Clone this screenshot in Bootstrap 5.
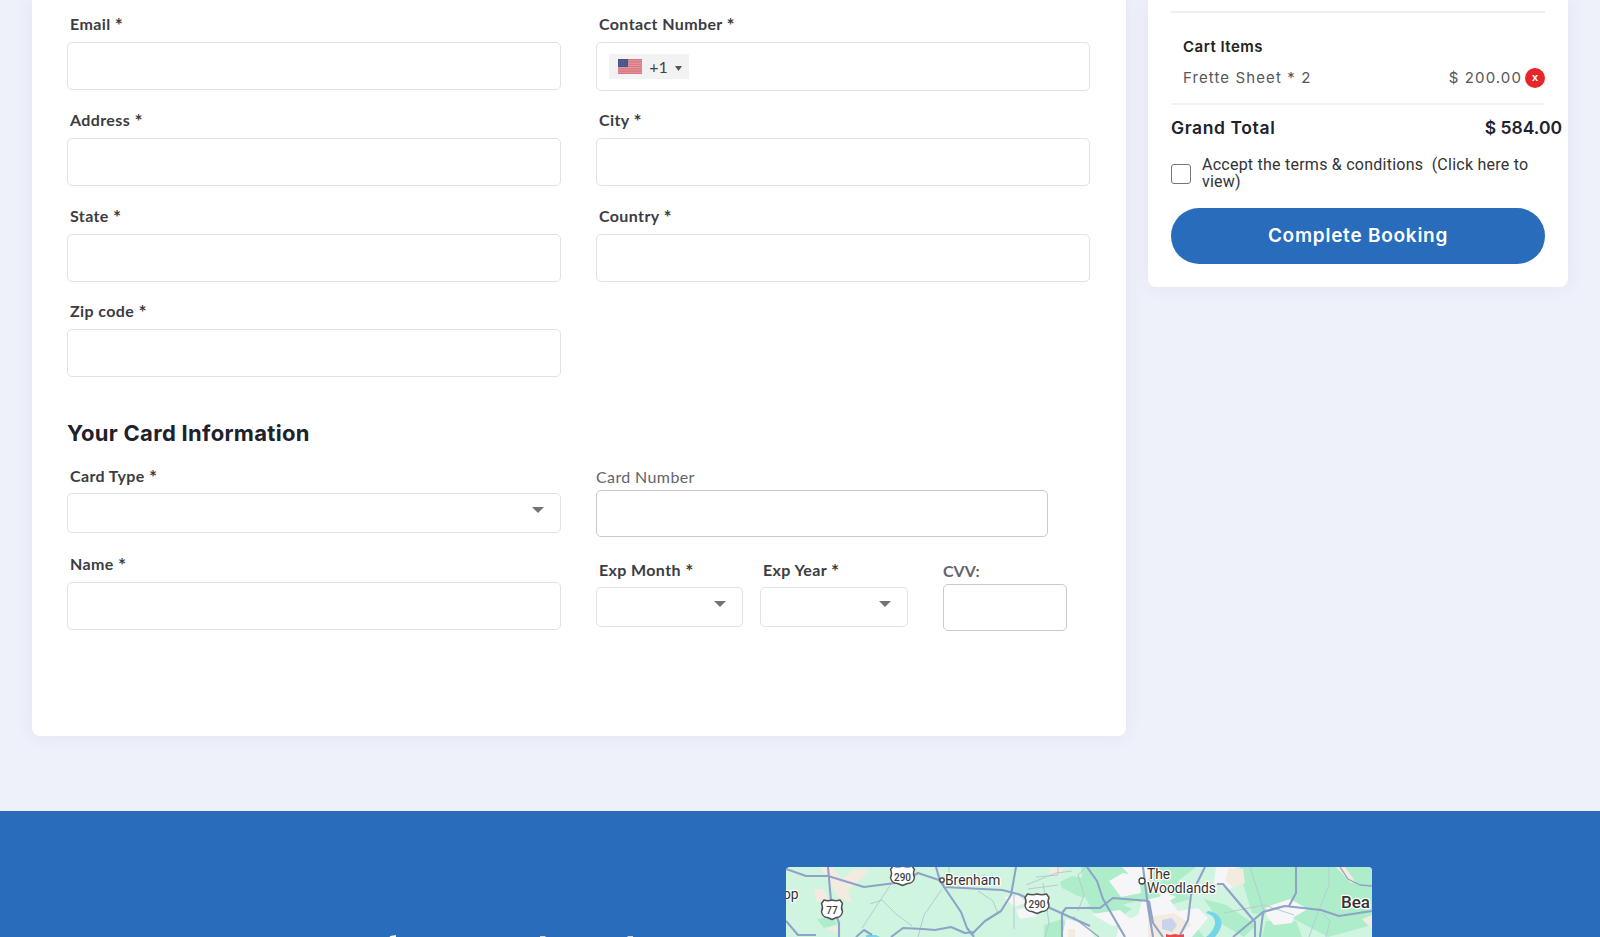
<!DOCTYPE html>
<html lang="en">
<head>
<meta charset="utf-8">
<meta name="viewport" content="width=device-width, initial-scale=1">
<title>Checkout</title>
<link href="https://cdn.jsdelivr.net/npm/bootstrap@5.3.0/dist/css/bootstrap.min.css" rel="stylesheet">
<style>
  body { background:#eef1fa; height:937px; font-family:Lato,"Open Sans",sans-serif; color:#2f3036; }
  .page-cards { height:811px; padding-left:32px; gap:22px; }
  .panel { background:#fff; border:0; border-radius:0 0 8px 8px; box-shadow:0 0 18px rgba(50,70,110,.07); }
  .form-panel { width:1094px; height:736px; padding:12px 36px 0 35px; flex:none; }
  .side-panel { width:420px; height:287px; padding:11px 23px 0; flex:none; }
  .fields { display:grid; grid-template-columns:494px 494px; column-gap:35px; }
  .cell { height:96px; }
  .cell-last { height:95px; }
  .lbl { display:block; font-size:16px; line-height:24px; height:24px; margin:0 0 6px 3px; font-weight:700; white-space:nowrap; color:#3b3c42; letter-spacing:.38px; }
  .lbl i { font-style:normal; font-size:19px; line-height:10px; position:relative; top:2px; letter-spacing:0; }
  .lbl-plain { font-weight:400; color:#62646a; }
  .form-control, .pick { border:1px solid #e1e2e4; border-radius:5px; height:48px; box-shadow:none; background:#fff; }
  .pick { height:40px; display:flex; align-items:center; justify-content:flex-end; padding:0 16px 7px 0; }
  .tall { height:49px; }
  .hosted { border-color:#cacaca; height:47px; }
  .dial { background:#f2f2f2; height:25px; width:80px; font-size:16px; padding:0 7px 0 9px; color:#444; }
  .sect-wrap { padding-top:22px; }
  .sect { font:700 22px/32px Inter,sans-serif; color:#20212b; letter-spacing:.3px; margin:0; height:32px; white-space:nowrap; }
  .pay { padding-top:15px; }
  .pay .lbl { margin-bottom:5px; }
  .pay .name-row { margin-top:19px; }
  .pay .name-row .lbl { margin-bottom:6px; }
  .pay .lbl-plain { margin:1px 0 1px; }
  .card-no { width:452px; }
  .exp { padding-top:21px; }
  .exp-m { width:147px; margin-right:17px; }
  .exp-y { width:148px; margin-right:35px; }
  .cvv { width:124px; }
  .pay .cvv-l { font-weight:700; letter-spacing:0; }
  .rule { height:2px; background:#efefef; }
  .cart { font-family:Inter,sans-serif; font-size:15px; line-height:20px; color:#55565a; letter-spacing:1.1px; padding-left:12px; white-space:nowrap; }
  .cart-head { padding-top:24px; letter-spacing:.5px; }
  .cart strong { color:#222; font-weight:600; }
  .cart-line { margin-top:11px; }
  .cart-price { margin-right:3px; }
  .del { width:20px; height:20px; border-radius:50%; background:#e7262b; color:#fff; font:700 11px/18px "Liberation Sans",sans-serif; letter-spacing:0; text-align:center; }
  .rule-2 { margin-top:15px; background:#f2f2f2; }
  .total { font:600 17.5px/24px Inter,sans-serif; color:#20212b; margin:11px -17px 0 0; white-space:nowrap; }
  .total span:first-child { letter-spacing:.6px; }
  .terms { font:400 16px/16.5px Roboto,sans-serif; color:#333; letter-spacing:.24px; margin-top:17px; height:33px; }
  .terms-t { margin-left:11px; width:345px; flex:none; }
  .box { width:20px; height:20px; border:1px solid #767676; border-radius:3px; flex:none; background:#fff; }
  .btn-book { background:#286cbb; color:#fff; border-radius:28px; height:56px; font:600 19px/54px Inter,sans-serif; padding:0; border:0; letter-spacing:.75px; margin-top:18px; flex:none; }
  .foot { background:#286cbb; height:126px; overflow:hidden; }
  .foot-text { width:786px; height:126px; }
  .foot-map { width:586px; height:70px; margin-top:56px; border-radius:4px 4px 0 0; overflow:hidden; }
  .foot-map svg { display:block; font-family:Roboto,sans-serif; }
</style>
</head>
<body class="overflow-hidden">
<main class="page-cards d-flex align-items-start">
  <section class="card panel form-panel">
    <div class="fields">
      <div class="cell"><label class="lbl">Email <i>*</i></label><input class="form-control"></div>
      <div class="cell"><label class="lbl">Contact Number <i>*</i></label>
        <div class="form-control tall d-flex align-items-center">
          <div class="dial d-flex align-items-center justify-content-between">
            <svg width="24" height="15" viewBox="0 0 24 15"><rect width="24" height="15" fill="#e0989f"/><path d="M0 .6h24M0 2.9h24M0 5.2h24M0 7.5h24M0 9.8h24M0 12.1h24M0 14.4h24" stroke="#d87480" stroke-width="1.15"/><rect width="10" height="8" fill="#46528c"/><path d="M1 2h8M1 4h8M1 6h8" stroke="#7580ad" stroke-width=".6" stroke-dasharray="1 1"/></svg>
            <span>+1</span>
            <svg class="mt-1" width="7" height="5" viewBox="0 0 7 5"><path d="M0 0h7L3.5 5z" fill="#555"/></svg>
          </div>
        </div>
      </div>
      <div class="cell"><label class="lbl">Address <i>*</i></label><input class="form-control"></div>
      <div class="cell"><label class="lbl">City <i>*</i></label><input class="form-control"></div>
      <div class="cell cell-last"><label class="lbl">State <i>*</i></label><input class="form-control"></div>
      <div class="cell cell-last"><label class="lbl">Country <i>*</i></label><input class="form-control"></div>
      <div class="cell"><label class="lbl">Zip code <i>*</i></label><input class="form-control"></div>
    </div>
    <div class="sect-wrap"><h2 class="sect">Your Card Information</h2></div>
    <div class="fields pay">
      <div>
        <div><label class="lbl">Card Type <i>*</i></label>
          <div class="pick"><svg width="12" height="6" viewBox="0 0 12 6"><path d="M0 0h12L6 6z" fill="#737373"/></svg></div></div>
        <div class="name-row"><label class="lbl">Name <i>*</i></label><input class="form-control"></div>
      </div>
      <div>
        <label class="lbl lbl-plain">Card Number</label>
        <div class="form-control hosted card-no"></div>
        <div class="exp d-flex align-items-start">
          <div class="exp-m"><label class="lbl">Exp Month <i>*</i></label><div class="pick"><svg width="12" height="6" viewBox="0 0 12 6"><path d="M0 0h12L6 6z" fill="#737373"/></svg></div></div>
          <div class="exp-y"><label class="lbl">Exp Year <i>*</i></label><div class="pick"><svg width="12" height="6" viewBox="0 0 12 6"><path d="M0 0h12L6 6z" fill="#737373"/></svg></div></div>
          <div class="cvv"><label class="lbl lbl-plain cvv-l">CVV:</label><div class="form-control hosted"></div></div>
        </div>
      </div>
    </div>
  </section>

  <aside class="card panel side-panel">
    <div class="rule"></div>
    <div class="cart cart-head"><strong>Cart Items</strong></div>
    <div class="cart d-flex align-items-center cart-line"><span>Frette Sheet * 2</span><span class="ms-auto cart-price">$ 200.00</span><span class="del">x</span></div>
    <div class="rule rule-2"></div>
    <div class="total d-flex justify-content-between"><span>Grand Total</span><span>$ 584.00</span></div>
    <div class="terms d-flex align-items-center"><span class="box"></span><span class="terms-t">Accept the terms &amp; conditions &nbsp;(Click here to<br>view)</span></div>
    <button class="btn btn-book w-100">Complete Booking</button>
  </aside>
</main>
<footer class="foot d-flex align-items-start">
  <!-- top of the footer heading, cut by the fold -->
  <svg class="foot-text" viewBox="0 0 786 126"><path d="M389.500 126q1-2 6.500-1.800v1.800zM540 125.200h5.500v.8H540zM627.500 125.200h5.500v.8h-5.500z" fill="#fff"/></svg>
  <div class="foot-map">
    <svg width="586" height="70" viewBox="0 0 586 70">
      <rect width="586" height="70" fill="#cff4df"/>
      <g fill="#adedca">
        <path d="M274 15l12-6 22 4v20l-16-4-16-8zM31 52l14-3 7 8-14 4zM258 58l18-6 20 18h-38zM295 0h115l-18 14 12 18-26 8-28-6-42 12-10-18z"/>
        <path d="M454 0h132v58l-44 12-34-18-42-6-8-26zM384 62l20-10 14 18h-30zM418 32l22 6 30 20-12 12-24-14zM300 40l24-8 22 10-22 14zM480 54h30l6 16h-40z"/>
      </g>
      <g fill="#f6f6f8">
        <path d="M323 14l14-8 16 4 2 16-20 4zM336 0h28l-2 18-14-5zM430 0l20 0 4 14-10 8-16-6zM306 47l28-4 14 12-22 4zM356 34l24-6 12 16 20-3 10 10-16 19h-76l4-14 18-8zM368 20l22 10-10 6zM280 52l22 6 6 12h-32zM480 40l24-8 18 10-14 8-2 6-18 2-8-10z"/>
        <path d="M230 43l14-4 8 10-18 3zM218 30l14-2 8 8-12 4z"/>
      </g>
      <g fill="#f3ebe0">
        <path d="M34 0h12l14 16 6 20-14-6-10-16zM50 18l18-16 16 2-20 18zM28 22l10 0 6 16-14-4zM40 62l12-4 2 8zM443 1l14 1 2 14-12 5-8-8zM264 1h14l-4 8-10-2zM550 0h9l10 14-4 2zM576 52l10-4v14zM282 62h7v8h-7zM362 50l26-4 18 12-16 12h-28z"/>
      </g>
      <path d="M376 53l10-2 5 7-5 7-10-3z" fill="#c7d4ec"/>
      <path d="M420 46c14 4 10 16 0 24h9c12-14 6-24-7-26zM80 68l10 0 4 2H80z" fill="#74d4e8"/>
      <g fill="none" stroke="#b5cbd2" stroke-width="1">
        <path d="M105 17L76 61M84 37l12-4 14 14 16 12M156 22l-18 26-6 22M163 0v14h28l8-7M192 24l15 10 5 13M240 18l30-12 16-2M228 28v34M242 22l30-4M257 16l6 40-4 14M272 0v8l-22 2M464 0l14 44 18-5M543 0v18l-12 30-8 22M438 46l40-8 30 10M536 46l8 8-4 16M300 0l-8 8 6 20-6 16"/>
      </g>
      <g fill="none" stroke="#8fa2c8" stroke-width="2.1" stroke-linejoin="round">
        <path d="M0 2l20 7h22l36 11 39-5 15-9 24 8 2 6 58 3 16 4 32 14 40 18"/>
        <path d="M42 0l3 34 8 22v14M0 54l12 14h18M70 70l8-7 8 5M105 70l12-9 20 1 12 1 16-3 14 6 10-1"/>
        <path d="M150 0l4 14 21 31 6 16 7 9M230 0l-5 28-10 16-16 10-14 14M276 70V46l4-5h34l13-10 36 3M301 0l10 14 6 18 22 38"/>
        <path d="M357 0l5 40 5 30M363 34l4 22 10 14M419 0l-14 28-3 25-9 17M431 17h6l32 38v15M447 70l30-25 22-6 36 4 18 6 33-5M510 0v26l-7 13M477 46l-3 24"/>
        <path d="M287 50l26 20M554 0l8 12 12 6 12 1" stroke-width="1.3"/>
      </g>
      <path d="M380 67l4 1 5-1 5 1 4-1v3h-18z" fill="#e54b4b"/>
      <g fill="#fff" stroke="#515151" stroke-width="1.500" stroke-linejoin="round">
        <path d="M38 33q4 1.500 8 0q4 1.500 8 0l2.500 3.500q-2 4 0 8q-1 6-6 6l-4.500 2-4.500-2q-5 0-6-6q2-4 0-8z"/>
        <path d="M107-1q5 1.500 9.500 0q5 1.500 9.500 0l2.500 3.500q-2 4 0 8q-1 6-7 6l-5 2-5-2q-6 0-7-6q2-4 0-8z"/>
        <path d="M241.500 27q5 1.500 9.500 0q5 1.500 9.500 0l2.500 3.500q-2 4 0 8q-1 6-7 6l-5 2-5-2q-6 0-7-6q2-4 0-8z"/>
      </g>
      <g font-size="10" font-weight="500" fill="#444" text-anchor="middle"><text x="46" y="47">77</text><text x="116.500" y="14">290</text><text x="251" y="41">290</text></g>
      <g font-size="13.800" fill="#333" stroke="#fff" stroke-width="2.500" paint-order="stroke" stroke-linejoin="round">
        <text x="-3" y="32">op</text><text x="159" y="18">Brenham</text><text x="361" y="12">The</text><text x="361" y="26">Woodlands</text><text x="555" y="41" font-size="17" font-weight="500">Bea</text>
      </g>
      <g fill="#fff" stroke="#444" stroke-width="1.300"><circle cx="156" cy="13" r="2.200"/><circle cx="356" cy="14" r="3"/></g>
    </svg>
  </div>
</footer>
<script src="https://cdn.jsdelivr.net/npm/bootstrap@5.3.0/dist/js/bootstrap.bundle.min.js"></script>
</body>
</html>
